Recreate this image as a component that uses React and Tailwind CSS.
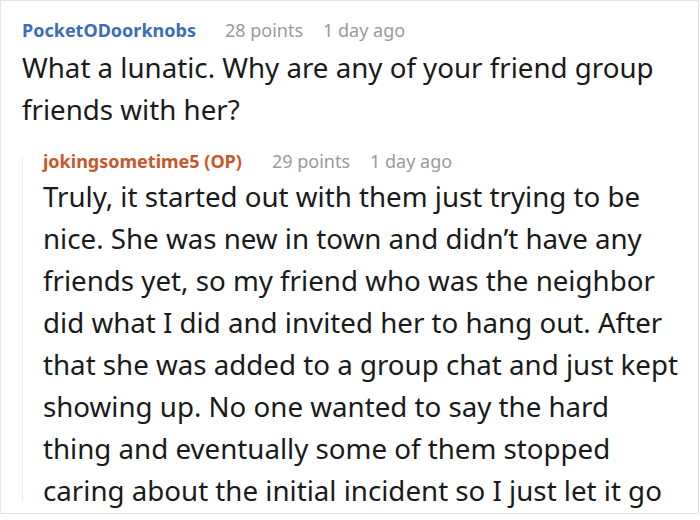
const lines = [
  "Truly, it started out with them just trying to be",
  "nice. She was new in town and didn’t have any",
  "friends yet, so my friend who was the neighbor",
  "did what I did and invited her to hang out. After",
  "that she was added to a group chat and just kept",
  "showing up. No one wanted to say the hard",
  "thing and eventually some of them stopped",
  "caring about the initial incident so I just let it go",
];

export default function App() {
  const f = { fontFamily: '"Noto Sans", "Open Sans", sans-serif' };
  return (
    <div className="w-[700px] h-[520px] bg-white overflow-hidden" style={f}>
      <div className="w-[699px] h-[514px] border border-[#e3e3e3] pl-[21px] pt-[17px] pr-[2px] overflow-hidden">
        <div className="flex items-baseline text-[18px] leading-[24px]">
          <span className="font-bold text-[#3d6db5]">PocketODoorknobs</span>
          <span className="ml-[29px] text-[#9a9a9a]">28 points</span>
          <span className="ml-[20px] text-[#9a9a9a]">1 day ago</span>
        </div>
        <div className="mt-[4px] text-[27.7px] leading-[42px] text-[#1a1a1a]">
          <div className="whitespace-nowrap">What a lunatic. Why are any of your friend group</div>
          <div className="whitespace-nowrap">friends with her?</div>
        </div>
        <div className="mt-[19px] flex">
          <div className="w-px mt-[8px] h-[345px] bg-[#ededed]"></div>
          <div className="ml-[20px] flex-1">
            <div className="flex items-baseline text-[18px] leading-[24px]">
              <span className="font-bold text-[#c8582a]">jokingsometime5 (OP)</span>
              <span className="ml-[30px] text-[#9a9a9a]">29 points</span>
              <span className="ml-[20px] text-[#9a9a9a]">1 day ago</span>
            </div>
            <div className="mt-[2px] text-[27.7px] leading-[42px] text-[#1a1a1a]">
              {lines.map((l) => (
                <div key={l} className="whitespace-nowrap">{l}</div>
              ))}
            </div>
          </div>
        </div>
      </div>
    </div>
  );
}
